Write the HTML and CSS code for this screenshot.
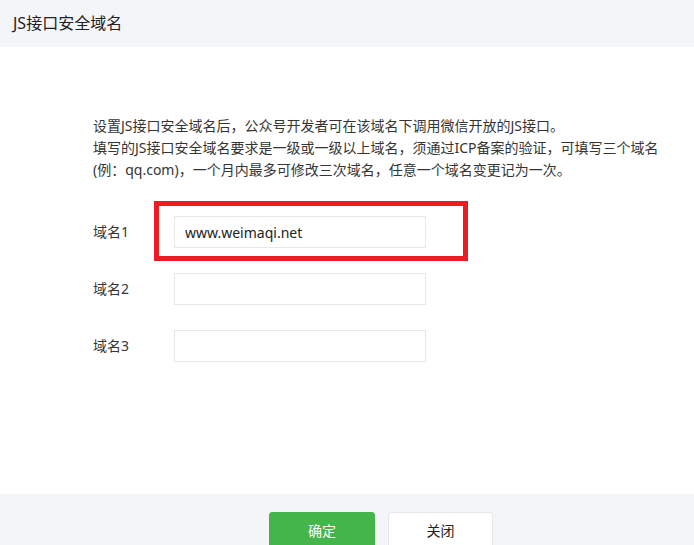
FILE: index.html
```html
<!DOCTYPE html>
<html lang="zh-CN">
<head>
  <meta charset="UTF-8" />
  <title>JS接口安全域名</title>
  <link rel="stylesheet" href="styles.css">
</head>
<body>
  <div class="dialog">
    <div class="dialog-hd">
      <h3>JS接口安全域名</h3>
    </div>

    <div class="dialog-bd">
      <p class="tips">
        设置JS接口安全域名后，公众号开发者可在该域名下调用微信开放的JS接口。<br>
        填写的JS接口安全域名要求是一级或一级以上域名，须通过ICP备案的验证，可填写三个域名<br>
        (例：qq.com)，一个月内最多可修改三次域名，任意一个域名变更记为一次。
      </p>

      <div class="form">
        <div class="form-row">
          <label class="form-label">域名1</label>
          <div class="form-field">
            <input class="form-input" type="text" value="www.weimaqi.net">
            <span class="highlight"></span>
          </div>
        </div>
        <div class="form-row">
          <label class="form-label">域名2</label>
          <div class="form-field">
            <input class="form-input" type="text">
          </div>
        </div>
        <div class="form-row">
          <label class="form-label">域名3</label>
          <div class="form-field">
            <input class="form-input" type="text">
          </div>
        </div>
      </div>
    </div>

    <div class="dialog-ft">
      <button class="btn btn-primary">确定</button>
      <button class="btn btn-default">关闭</button>
    </div>
  </div>
</body>
</html>
```

FILE: styles.css
```css
* {
  box-sizing: border-box;
  margin: 0;
  padding: 0;
}

html, body {
  height: 100%;
  background: #fff;
  font-family: "Noto Sans", "Noto Sans CJK SC", sans-serif;
  font-size: 14px;
  color: #353535;
}

.dialog {
  display: flex;
  flex-direction: column;
  height: 100%;
}

.dialog-hd {
  flex-shrink: 0;
  height: 47px;
  background: #f4f5f9;
  padding-left: 13px;
  display: flex;
  align-items: center;
}

.dialog-hd h3 {
  font-size: 16px;
  font-weight: normal;
  color: #222;
  line-height: 20px;
  margin-top: -2px;
}

.dialog-bd {
  flex-shrink: 0;
  height: 447px;
  padding: 68px 0 0 93px;
}

.tips {
  line-height: 22px;
  white-space: nowrap;
}

.form {
  margin-top: 35px;
  display: flex;
  flex-direction: column;
  gap: 25px;
}

.form-row {
  display: flex;
  align-items: center;
  height: 32px;
}

.form-label {
  width: 81px;
  line-height: 32px;
}

.form-field {
  position: relative;
}

.form-input {
  display: block;
  width: 252px;
  height: 32px;
  border: 1px solid #e7e7eb;
  padding: 0 10px;
  font-family: "Noto Sans", "Noto Sans CJK SC", sans-serif;
  font-size: 14px;
  color: #222;
  outline: none;
}

/* red annotation around the first domain */
.highlight {
  position: absolute;
  left: -20px;
  top: -15px;
  width: 314px;
  height: 60px;
  border: 5px solid #ed1c24;
  pointer-events: none;
}

.dialog-ft {
  flex: 1;
  min-height: 0;
  background: #f4f5f9;
  padding: 18px 0 0 269px;
  display: flex;
  gap: 13px;
  align-items: flex-start;
  overflow: hidden;
}

.btn {
  flex-shrink: 0;
  width: 106px;
  height: 36px;
  border-radius: 3px;
  font-family: "Noto Sans", "Noto Sans CJK SC", sans-serif;
  font-size: 14px;
  cursor: pointer;
}

.btn-primary {
  background: #44b549;
  border: 1px solid #44b549;
  color: #fff;
}

.btn-default {
  width: 105px;
  background: #fff;
  border: 1px solid #e7e7eb;
  color: #222;
}
```
